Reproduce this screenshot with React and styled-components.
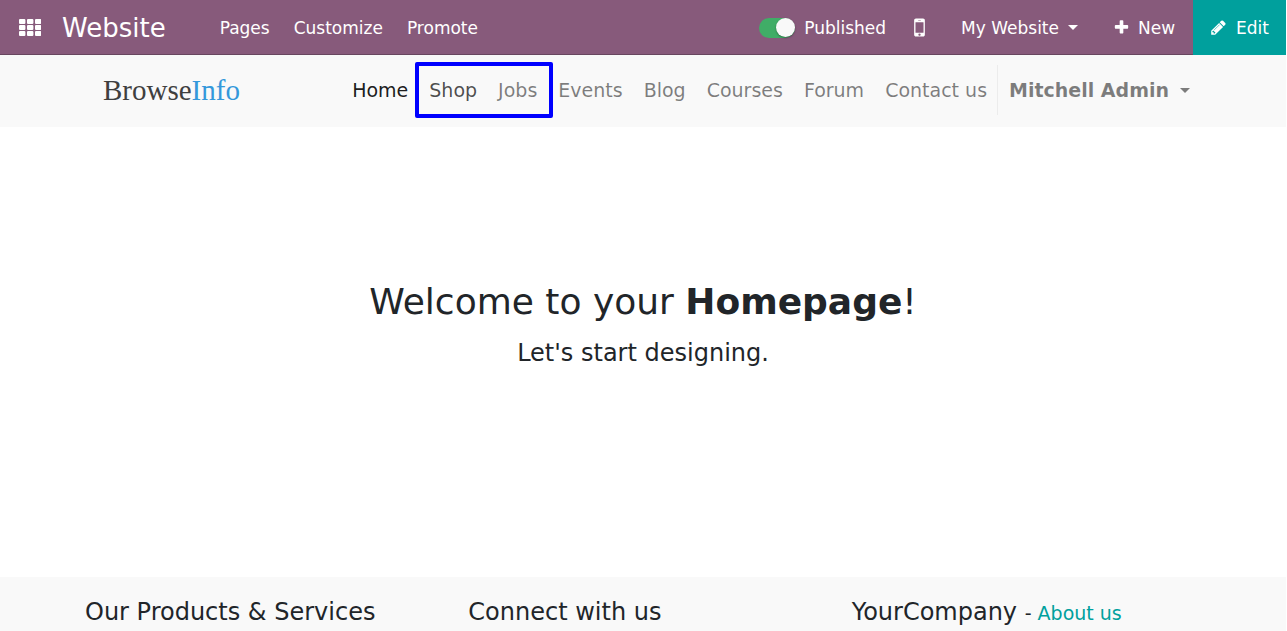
import React from "react";
import styled, { createGlobalStyle } from "styled-components";

const GlobalStyle = createGlobalStyle`
  *, *::before, *::after { box-sizing: border-box; }
  body {
    margin: 0;
    background: #fff;
    color: #212529;
    font-family: "DejaVu Sans", sans-serif;
  }
  button { font: inherit; }
`;

const Page = styled.div`
  display: flex;
  flex-direction: column;
  min-height: 100vh;
  padding-right: 1px;
`;

const Toolbar = styled.nav`
  display: flex;
  align-items: stretch;
  height: 55px;
  background: #875a7b;
  color: #fff;
  font-size: 17px;
`;

const ToolbarGroup = styled.div`
  display: flex;
  align-items: stretch;
  flex: ${(p) => (p.$grow ? 1 : "none")};
  box-shadow: inset 0 -1px 0 #68465f;
`;

const ToolbarButton = styled.button`
  display: flex;
  align-items: center;
  gap: ${(p) => p.$gap || 0}px;
  padding: 0 ${(p) => p.$pad || 12}px;
  border: 0;
  background: ${(p) => (p.$primary ? "#00a09d" : "transparent")};
  color: #fff;
  white-space: nowrap;
  cursor: pointer;
`;

const AppTitle = styled.a`
  display: flex;
  align-items: center;
  margin: 0 42px 0 2px;
  color: #fff;
  font-size: 26px;
  text-decoration: none;
`;

const PublishLabel = styled.label`
  display: flex;
  align-items: center;
  gap: 9px;
  padding-right: 9px;
  cursor: pointer;
`;

const Switch = styled.input`
  appearance: none;
  display: flex;
  align-items: center;
  justify-content: flex-start;
  width: 36px;
  height: 20px;
  margin: 0;
  border-radius: 10px;
  background: #adb5bd;
  cursor: pointer;

  &::before {
    content: "";
    width: 19px;
    height: 19px;
    border-radius: 50%;
    background: #f9f9f9;
    box-shadow: 0 1px 2px rgba(0, 0, 0, 0.35);
  }
  &:checked {
    justify-content: flex-end;
    background: #40ad67;
  }
`;

const Caret = styled.span`
  border: 5px solid transparent;
  border-top-color: currentColor;
  border-bottom: 0;
`;

const Container = styled.div`
  display: flex;
  width: 100%;
  max-width: 1150px;
  margin: 0 auto;
  padding: ${(p) => (p.$flush ? "0" : "0 17px")};
`;

const SiteHeader = styled.header`
  display: flex;
  align-items: center;
  height: 72px;
  padding-bottom: 2px;
  background: #f9f9f9;
`;

const Logo = styled.a`
  display: flex;
  align-items: center;
  padding-left: 18px;
  color: #3f3f3f;
  font: 29px/32px "Liberation Serif", serif;
  text-decoration: none;

  span { color: #3498db; }
`;

const Menu = styled.ul`
  display: flex;
  align-items: center;
  margin: 0 0 0 auto;
  padding: 0;
  list-style: none;
  font-size: 19px;
  line-height: 28px;
`;

const MenuItem = styled.li`
  position: relative;
`;

const menuColors = { active: "rgba(0,0,0,.9)", hover: "rgba(0,0,0,.7)" };

const MenuLink = styled.a`
  display: block;
  padding: 11px 10px 11px 11px;
  color: ${(p) => menuColors[p.$state] || "rgba(0,0,0,.5)"};
  text-decoration: none;
  white-space: nowrap;
`;

const Highlight = styled.div`
  position: absolute;
  inset: -3px -6px -3px -3px;
  border: 4px solid #00f;
  border-radius: 2px;
  pointer-events: none;
`;

const MarkedItems = styled.li`
  position: relative;
`;

const SubList = styled.ul`
  display: flex;
  margin: 0;
  padding: 0;
  list-style: none;
`;

const UserButton = styled.button`
  display: flex;
  align-items: center;
  gap: 11px;
  padding: 11px;
  border: 0;
  border-left: 1px solid #ececec;
  background: transparent;
  color: rgba(0, 0, 0, 0.5);
  font-weight: 700;
  cursor: pointer;
`;

const Hero = styled.main`
  display: flex;
  flex-direction: column;
  align-items: center;
  justify-content: center;
  min-height: 450px;
  padding: 24px;
  text-align: center;
`;

const HeroTitle = styled.h1`
  margin: 0 0 14px;
  font-size: 36px;
  line-height: 44px;
  font-weight: 400;
`;

const HeroText = styled.p`
  margin: 0 0 56px;
  font-size: 24px;
  line-height: 30px;
`;

const Footer = styled.footer`
  flex: 1;
  padding-top: 20px;
  background: #f9f9f9;
`;

const FooterColumn = styled.section`
  flex: 1;
  padding: 0 17px;
`;

const FooterTitle = styled.h2`
  margin: 0;
  font-size: 24px;
  line-height: 30px;
  font-weight: 400;
  white-space: nowrap;

  small { font-size: 19px; }
  a { color: #00a09d; text-decoration: none; }
`;

const Glyph = ({ size, d }) => (
  <svg width={size} height={size} viewBox="0 0 1792 1792" fill="currentColor" aria-hidden="true">
    <path d={d} />
  </svg>
);

const AppsIcon = () => (
  <svg width="22" height="17" viewBox="0 0 22 17" fill="currentColor" aria-hidden="true">
    {[0, 6, 12].map((y) =>
      [0, 8, 16].map((x) => <rect key={`${x}-${y}`} x={x} y={y} width="6.4" height="4.9" rx="1" />)
    )}
  </svg>
);

const MOBILE =
  "M976 1408q0-33-23.5-56.5t-56.5-23.5-56.5 23.5-23.5 56.5 23.5 56.5 56.5 23.5 56.5-23.5 23.5-56.5zm208-160v-704q0-13-9.5-22.5t-22.5-9.5h-512q-13 0-22.5 9.5t-9.5 22.5v704q0 13 9.5 22.5t22.5 9.5h512q13 0 22.5-9.5t9.5-22.5zm-192-848q0-16-16-16h-160q-16 0-16 16t16 16h160q16 0 16-16zm288-16v1024q0 52-38 90t-90 38h-512q-52 0-90-38t-38-90v-1024q0-52 38-90t90-38h512q52 0 90 38t38 90z";
const PLUS =
  "M1600 736v192q0 40-28 68t-68 28h-416v416q0 40-28 68t-68 28h-192q-40 0-68-28t-28-68v-416h-416q-40 0-68-28t-28-68v-192q0-40 28-68t68-28h416v-416q0-40 28-68t68-28h192q40 0 68 28t28 68v416h416q40 0 68 28t28 68z";
const PENCIL =
  "M491 1536l91-91-235-235-91 91v107h128v128h107zm523-928q0-22-22-22-10 0-17 7l-542 542q-7 7-7 17 0 22 22 22 10 0 17-7l542-542q7-7 7-17zm-54-192l416 416-832 832h-416v-416zm683 96q0 53-37 90l-166 166-416-416 166-165q36-38 90-38 53 0 91 38l235 234q37 39 37 91z";

const Link = ({ children, state }) => (
  <MenuItem>
    <MenuLink href="#" $state={state}>{children}</MenuLink>
  </MenuItem>
);

export default function App() {
  return (
    <>
      <GlobalStyle />
      <Page>
        <Toolbar>
          <ToolbarGroup $grow>
            <ToolbarButton $pad={19} aria-label="Applications">
              <AppsIcon />
            </ToolbarButton>
            <AppTitle href="#">Website</AppTitle>
            <ToolbarButton>Pages</ToolbarButton>
            <ToolbarButton>Customize</ToolbarButton>
            <ToolbarButton>Promote</ToolbarButton>
          </ToolbarGroup>
          <ToolbarGroup>
            <PublishLabel>
              <Switch type="checkbox" defaultChecked />
              Published
            </PublishLabel>
            <ToolbarButton aria-label="Mobile preview">
              <Glyph size={25} d={MOBILE} />
            </ToolbarButton>
            <ToolbarButton $pad={17} $gap={9}>
              My Website <Caret />
            </ToolbarButton>
            <ToolbarButton $pad={18} $gap={8}>
              <Glyph size={17} d={PLUS} /> New
            </ToolbarButton>
          </ToolbarGroup>
          <ToolbarButton $primary $pad={17} $gap={9}>
            <Glyph size={17} d={PENCIL} /> Edit
          </ToolbarButton>
        </Toolbar>

        <SiteHeader>
          <Container>
            <Logo href="#">Browse<span>Info</span></Logo>
            <Menu>
              <Link state="active">Home</Link>
              <MarkedItems>
                <SubList>
                  <Link state="hover">Shop</Link>
                  <Link>Jobs</Link>
                </SubList>
                <Highlight />
              </MarkedItems>
              <Link>Events</Link>
              <Link>Blog</Link>
              <Link>Courses</Link>
              <Link>Forum</Link>
              <Link>Contact us</Link>
              <MenuItem>
                <UserButton>Mitchell Admin <Caret /></UserButton>
              </MenuItem>
            </Menu>
          </Container>
        </SiteHeader>

        <Hero>
          <HeroTitle>Welcome to your <b>Homepage</b>!</HeroTitle>
          <HeroText>Let's start designing.</HeroText>
        </Hero>

        <Footer>
          <Container $flush>
            <FooterColumn><FooterTitle>Our Products &amp; Services</FooterTitle></FooterColumn>
            <FooterColumn><FooterTitle>Connect with us</FooterTitle></FooterColumn>
            <FooterColumn>
              <FooterTitle>YourCompany <small>- <a href="#">About us</a></small></FooterTitle>
            </FooterColumn>
          </Container>
        </Footer>
      </Page>
    </>
  );
}
